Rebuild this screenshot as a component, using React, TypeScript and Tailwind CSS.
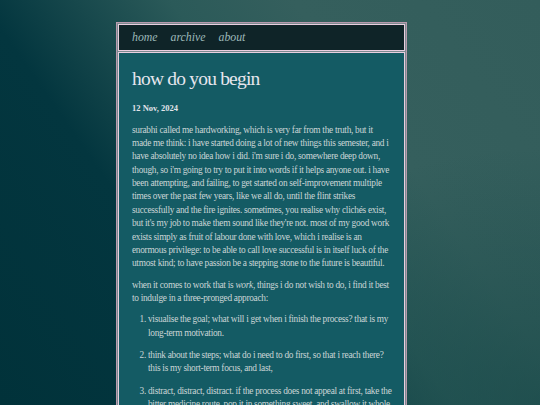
export default function App() {
  const serif = { fontFamily: '"Liberation Serif", "DejaVu Serif", serif' };
  return (
    <div className="relative h-[405px] w-full overflow-hidden bg-[linear-gradient(55deg,#01323a_0%,#03363f_32%,#2b5a59_55%,#355f5d_70%,#335d5b_100%)]">
      <div className="pointer-events-none absolute inset-0 bg-[radial-gradient(ellipse_at_100%_100%,rgba(20,70,70,0.6)_0%,rgba(20,70,70,0)_45%)]" />
      <div className="relative ml-[116px] mt-[22px] w-[291px] border border-[#b79aae] bg-[#7d8a90] p-px" style={serif}>
        <nav className="flex h-[27px] items-center gap-[13px] border border-[#e9cfe0] bg-[#0f2428] px-[13px] text-[11.8px] italic text-[#9cb8b8]">
          <a>home</a>
          <a>archive</a>
          <a>about</a>
        </nav>
        <main className="mt-px h-[400px] border border-[#e9cfe0] bg-[#145b64] pl-[13px] pr-[11px] pt-[10px] text-[#cad5d6]">
          <h1 className="text-[19.5px] leading-[32px] tracking-[-0.8px] text-[#e6e6ee]">how do you begin</h1>
          <p className="mt-[7px] text-[8.5px] font-bold text-[#e2e4ea]">12 Nov, 2024</p>
          <div className="mt-[9px] text-[9.35px] leading-[13.35px] tracking-[-0.3px]">
            <p>
              surabhi called me hardworking, which is very far from the truth, but it made me think: i have started doing a lot of new things this semester, and i have absolutely no idea how i did. i'm sure i do, somewhere deep down, though, so i'm going to try to put it into words if it helps anyone out. i have been attempting, and failing, to get started on self-improvement multiple times over the past few years, like we all do, until the flint strikes successfully and the fire ignites. sometimes, you realise why clichés exist, but it's my job to make them sound like they're not. most of my good work exists simply as fruit of labour done with love, which i realise is an enormous privilege: to be able to call love successful is in itself luck of the utmost kind; to have passion be a stepping stone to the future is beautiful.
            </p>
            <p className="mt-[8px]">
              when it comes to work that is <em>work</em>, things i do not wish to do, i find it best to indulge in a three-pronged approach:
            </p>
            <ol className="mt-[8px] list-decimal space-y-[9px] pl-[16px]">
              <li>visualise the goal; what will i get when i finish the process? that is my long-term motivation.</li>
              <li>think about the steps; what do i need to do first, so that i reach there? this is my short-term focus, and last,</li>
              <li>distract, distract, distract. if the process does not appeal at first, take the bitter medicine route, pop it in something sweet, and swallow it whole.</li>
            </ol>
          </div>
        </main>
      </div>
    </div>
  );
}
